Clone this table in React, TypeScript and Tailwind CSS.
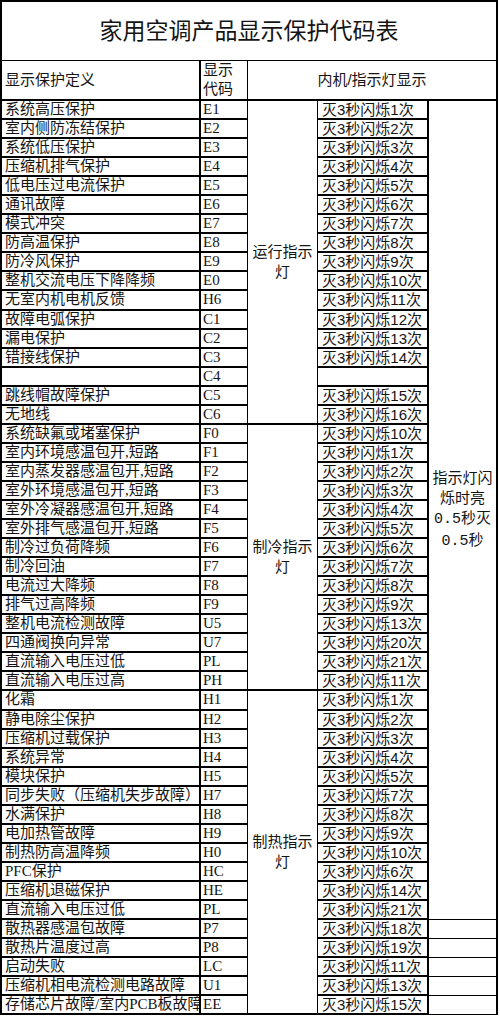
const rows: [string, string, string][] = [
  ["系统高压保护", "E1", "灭3秒闪烁1次"],
  ["室内侧防冻结保护", "E2", "灭3秒闪烁2次"],
  ["系统低压保护", "E3", "灭3秒闪烁3次"],
  ["压缩机排气保护", "E4", "灭3秒闪烁4次"],
  ["低电压过电流保护", "E5", "灭3秒闪烁5次"],
  ["通讯故障", "E6", "灭3秒闪烁6次"],
  ["模式冲突", "E7", "灭3秒闪烁7次"],
  ["防高温保护", "E8", "灭3秒闪烁8次"],
  ["防冷风保护", "E9", "灭3秒闪烁9次"],
  ["整机交流电压下降降频", "E0", "灭3秒闪烁10次"],
  ["无室内机电机反馈", "H6", "灭3秒闪烁11次"],
  ["故障电弧保护", "C1", "灭3秒闪烁12次"],
  ["漏电保护", "C2", "灭3秒闪烁13次"],
  ["错接线保护", "C3", "灭3秒闪烁14次"],
  ["", "C4", ""],
  ["跳线帽故障保护", "C5", "灭3秒闪烁15次"],
  ["无地线", "C6", "灭3秒闪烁16次"],
  ["系统缺氟或堵塞保护", "F0", "灭3秒闪烁10次"],
  ["室内环境感温包开,短路", "F1", "灭3秒闪烁1次"],
  ["室内蒸发器感温包开,短路", "F2", "灭3秒闪烁2次"],
  ["室外环境感温包开,短路", "F3", "灭3秒闪烁3次"],
  ["室外冷凝器感温包开,短路", "F4", "灭3秒闪烁4次"],
  ["室外排气感温包开,短路", "F5", "灭3秒闪烁5次"],
  ["制冷过负荷降频", "F6", "灭3秒闪烁6次"],
  ["制冷回油", "F7", "灭3秒闪烁7次"],
  ["电流过大降频", "F8", "灭3秒闪烁8次"],
  ["排气过高降频", "F9", "灭3秒闪烁9次"],
  ["整机电流检测故障", "U5", "灭3秒闪烁13次"],
  ["四通阀换向异常", "U7", "灭3秒闪烁20次"],
  ["直流输入电压过低", "PL", "灭3秒闪烁21次"],
  ["直流输入电压过高", "PH", "灭3秒闪烁11次"],
  ["化霜", "H1", "灭3秒闪烁1次"],
  ["静电除尘保护", "H2", "灭3秒闪烁2次"],
  ["压缩机过载保护", "H3", "灭3秒闪烁3次"],
  ["系统异常", "H4", "灭3秒闪烁4次"],
  ["模块保护", "H5", "灭3秒闪烁5次"],
  ["同步失败（压缩机失步故障）", "H7", "灭3秒闪烁7次"],
  ["水满保护", "H8", "灭3秒闪烁8次"],
  ["电加热管故障", "H9", "灭3秒闪烁9次"],
  ["制热防高温降频", "H0", "灭3秒闪烁10次"],
  ["PFC保护", "HC", "灭3秒闪烁6次"],
  ["压缩机退磁保护", "HE", "灭3秒闪烁14次"],
  ["直流输入电压过低", "PL", "灭3秒闪烁21次"],
  ["散热器感温包故障", "P7", "灭3秒闪烁18次"],
  ["散热片温度过高", "P8", "灭3秒闪烁19次"],
  ["启动失败", "LC", "灭3秒闪烁11次"],
  ["压缩机相电流检测电路故障", "U1", "灭3秒闪烁13次"],
  ["存储芯片故障/室内PCB板故障", "EE", "灭3秒闪烁15次"],
];

const serif = "font-['Liberation_Serif','Noto_Sans_CJK_SC',serif]";
const sans = "font-['Liberation_Sans','Noto_Sans_CJK_SC',sans-serif]";

function GroupLabel({ first, second, span }: { first: string; second: string; span: string }) {
  return (
    <div
      className={`col-start-3 ${span} flex flex-col items-center justify-center border-r border-b-2 border-black text-[15px] leading-[20px] ${sans}`}
    >
      <span>{first}</span>
      <span>{second}</span>
    </div>
  );
}

export default function App() {
  const cells: React.ReactNode[] = [];

  rows.forEach(([name, code, blink], i) => {
    cells.push(
      <div
        key={`a${i}`}
        className={`col-start-1 flex items-center overflow-hidden whitespace-nowrap border-r-2 border-b-2 border-black pl-[3px] text-[15px] leading-[17px] ${serif}`}
      >
        {name}
      </div>
    );
    cells.push(
      <div
        key={`b${i}`}
        className={`col-start-2 flex items-center overflow-hidden whitespace-nowrap border-r border-b-2 border-black pl-[2px] text-[15px] leading-[17px] ${serif}`}
      >
        {code}
      </div>
    );
    if (i === 0) cells.push(<GroupLabel key="g1" first="运行指示" second="灯" span="row-span-17" />);
    if (i === 17) cells.push(<GroupLabel key="g2" first="制冷指示" second="灯" span="row-span-14" />);
    if (i === 31) cells.push(<GroupLabel key="g3" first="制热指示" second="灯" span="row-span-17" />);
    cells.push(
      <div
        key={`d${i}`}
        className={`col-start-4 flex items-center overflow-hidden whitespace-nowrap border-r-2 border-b-2 border-black pl-1 text-[15px] leading-[17px] ${sans}`}
      >
        {blink}
      </div>
    );
    if (i === 0) {
      cells.push(
        <div
          key="e0"
          className={`col-start-5 row-span-43 flex flex-col items-center justify-center border-r-2 border-b border-black text-[15px] leading-[20px] ${sans}`}
        >
          <span>指示灯闪</span>
          <span>烁时亮</span>
          <span>
            <span className="font-['Liberation_Mono',monospace]">0.5</span>秒灭
          </span>
          <span>
            <span className="font-['Liberation_Mono',monospace]">0.5</span>秒
          </span>
        </div>
      );
    }
    if (i >= 43) {
      cells.push(<div key={`e${i}`} className="col-start-5 border-r-2 border-b border-black" />);
    }
  });

  return (
    <div className="w-[498px] bg-white text-[#141414]">
      <div className="border-l-2 border-t-2 border-black">
        <div
          className={`flex h-[59px] items-center justify-center border-r-2 border-b border-black text-[23px] ${sans}`}
        >
          家用空调产品显示保护代码表
        </div>
        <div className="grid h-[40px] grid-cols-[199px_47px_250px]">
          <div className={`flex items-center border-r-2 border-b-2 border-black pl-[3px] text-[15px] ${serif}`}>
            显示保护定义
          </div>
          <div
            className={`flex flex-col justify-center border-r border-b-2 border-black pl-[2px] text-[15px] leading-[19px] ${serif}`}
          >
            <span>显示</span>
            <span>代码</span>
          </div>
          <div
            className={`flex items-center justify-center border-r-2 border-b-2 border-black text-[15px] ${sans}`}
          >
            内机/指示灯显示
          </div>
        </div>
        <div className="grid grid-cols-[199px_47px_70px_111px_69px] auto-rows-[19.06px]">{cells}</div>
      </div>
    </div>
  );
}
